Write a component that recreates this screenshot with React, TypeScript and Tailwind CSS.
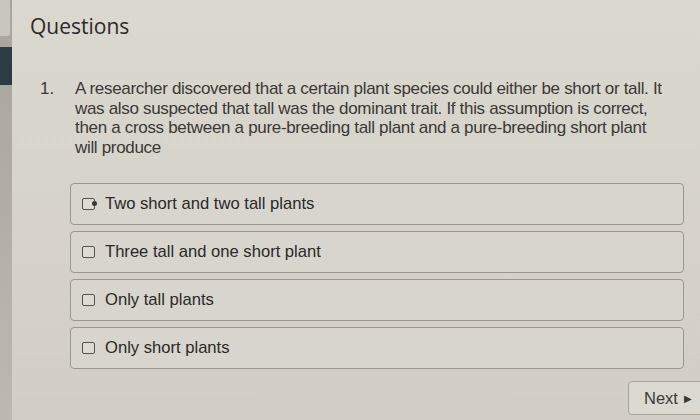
import React from "react";

const options = [
  "Two short and two tall plants",
  "Three tall and one short plant",
  "Only tall plants",
  "Only short plants",
];

function Box({ first }: { first?: boolean }) {
  return (
    <span className="relative inline-block w-[13px] h-[12px] border-[1.5px] border-[#55524d] rounded-[2px] bg-[#dedbd4] shrink-0">
      {first && (
        <span className="absolute -right-[3px] top-[2px] w-[5px] h-[5px] rounded-full bg-[#3a3834]" />
      )}
    </span>
  );
}

export default function App() {
  return (
    <div className="w-[700px] h-[420px] overflow-hidden flex bg-gradient-to-b from-[#dbd8d0] to-[#d2cec5] font-['Liberation_Sans',Arial,sans-serif] text-[#2e2d2b]">
      {/* left edge of the window */}
      <div className="w-[12px] flex flex-col bg-gradient-to-b from-[#a8a49e] to-[#bdb8b0] shrink-0">
        <div className="h-[36px] mr-[2px] bg-[#c9c6c0] rounded-br-[3px]" />
        <div className="h-[11px]" />
        <div className="h-[38px] bg-[#2d3b42]" />
      </div>

      <div className="flex-1 flex flex-col relative">
        <h1 className="pl-[18px] pt-[12px] text-[21px] leading-[28px] font-['Open_Sans',sans-serif] text-[#2b2a28]">
          Questions
        </h1>

        <div className="flex mt-[39px] pl-[28px] text-[17px] leading-[19.5px] text-[#3a3936]">
          <span className="w-[35px]">1.</span>
          <p className="w-[620px] tracking-[-0.32px] whitespace-nowrap">
            A researcher discovered that a certain plant species could either be short or tall. It
            <br />
            was also suspected that tall was the dominant trait. If this assumption is correct,
            <br />
            then a cross between a pure-breeding tall plant and a pure-breeding short plant
            <br />
            will produce
          </p>
        </div>

        <div className="flex flex-col gap-[6px] mt-[26px] ml-[58px] w-[614px]">
          {options.map((o, i) => (
            <div
              key={o}
              className="h-[42px] flex items-center gap-[10px] pl-[11px] border border-[#9b978f] rounded-[4px] bg-[#d8d5ce] text-[16.6px] text-[#2a2927]"
            >
              <Box first={i === 0} />
              <span>{o}</span>
            </div>
          ))}
        </div>

        <div className="flex justify-end mt-[12px] -mr-[6px]">
          <button className="h-[34px] w-[78px] flex items-center gap-[6px] pl-[15px] border border-[#a8a49c] rounded-[4px] bg-[#dcd9d2] text-[16.5px] text-[#3b3a37]">
            Next
            <span className="text-[10px]">▶</span>
          </button>
        </div>
      </div>
    </div>
  );
}
